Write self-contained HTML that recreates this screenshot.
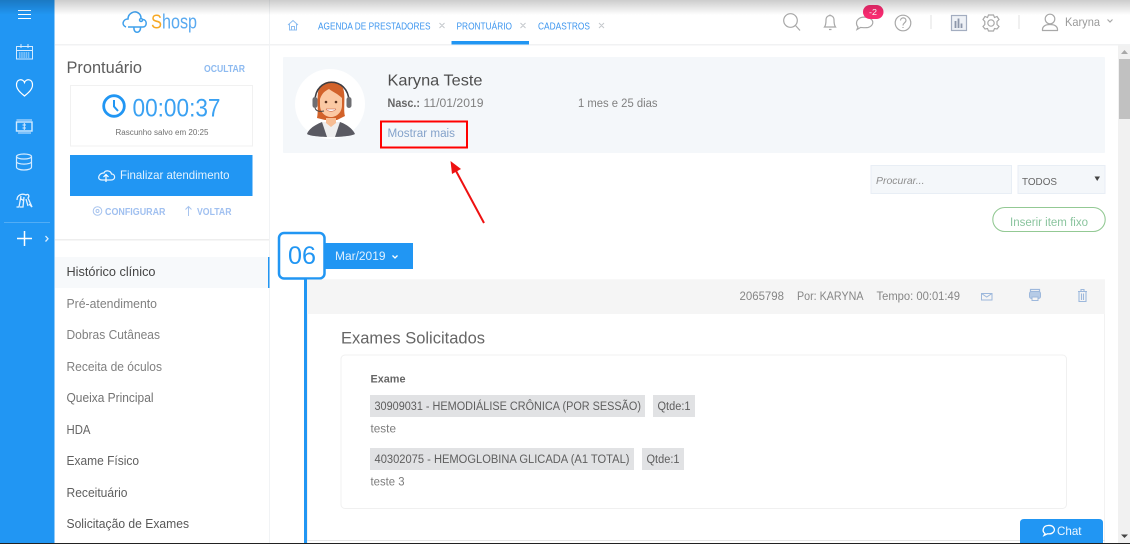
<!DOCTYPE html>
<html lang="pt"><head><meta charset="utf-8"><title>Shosp</title>
<style>
html,body{margin:0;padding:0;width:1130px;height:544px;overflow:hidden;background:#fff}
svg{display:block;filter:blur(.35px)}
text{font-family:"Liberation Sans",sans-serif}
</style></head><body>
<svg width="1130" height="544" viewBox="0 0 1130 544" xmlns="http://www.w3.org/2000/svg">
<defs><linearGradient id="g" x1="0" y1="0" x2="0" y2="1"><stop offset="0" stop-color="#000" stop-opacity=".2"/><stop offset="1" stop-color="#000" stop-opacity="0"/></linearGradient></defs>
<rect width="1130" height="544" fill="#fff"/>
<!-- sidebar -->
<rect width="54.500" height="544" fill="#2196f3"/>
<g fill="none" stroke="#fff" stroke-width="1">
<path d="M18 10.500H31M18 14.500H31M18 18.500H31"/>
<g stroke="#d5ebff"><rect x="16.500" y="46.500" width="16" height="12.500"/><path d="M16.500 50.500H32.500M21 44V48M28 44V48"/><path d="M19 53H30M19 55H30M19 57H30" stroke-dasharray="1.500 .7"/></g>
<path d="M24.500 96C21 93 16.500 89.500 16.500 85C16.500 78.500 23 78.500 24.500 82.500C26 78.500 32.500 78.500 32.500 85C32.500 89.500 28 93 24.500 96Z" stroke-width="1.200"/>
<g stroke="#d5ebff"><rect x="16.500" y="122" width="15.500" height="9" stroke-width="1.400"/><path d="M16.500 120H32M18 133H31M24.300 123V130M22.500 125H26M22.500 128H26"/></g>
<g stroke="#d5ebff" stroke-width="1.200"><ellipse cx="24" cy="156.500" rx="7.500" ry="2.500"/><path d="M16.500 156.500V167C16.500 171 31.500 171 31.500 167V156.500M16.500 161.500C16.500 165 31.500 165 31.500 161.500"/></g>
<g stroke="#e4f2ff" stroke-width="1.300"><path d="M17 200C17 195 22 193 26 195C28 193 30 196 28 198L32 207L29 204M21 196L19 207H16.500M24 197L23 207H20M26 199L28 206M20 198L24 201"/></g>
</g>
<rect x="4" y="222" width="46" height="1" fill="#52adf5"/>
<path d="M17 238.500H32M24.500 231V246" stroke="#fff" stroke-width="1.500" fill="none"/>
<path d="M45.500 236L48 238.800L45.500 241.500" stroke="#dceeff" stroke-width="1.300" fill="none"/>
<!-- left panel -->
<rect x="269" y="0" width="1" height="544" fill="#f1f3f5"/>
<rect x="55" y="44" width="1075" height="1.500" fill="#f1f2f3"/>
<path d="M126 27C121 25 123 19 128 19C128 13 135 10 139 13.500C141 15 141 17 141 19" fill="none" stroke="#3fa0ec" stroke-width="1.500"/>
<path d="M128 27H143C147 27 147.500 20 143 19.500M134 27C133 34 141 34 140.500 27M141 18.500A1.500 1.500 0 1 0 141.100 18.500" fill="none" stroke="#3fa0ec" stroke-width="1.500"/>
<text x="151" y="28.500" font-size="20" fill="#f7a823" textLength="11" lengthAdjust="spacingAndGlyphs">S</text>
<text x="162" y="28.500" font-size="20" fill="#5aaaf0" textLength="35" lengthAdjust="spacingAndGlyphs">hosp</text>
<text x="66.500" y="73" font-size="16.500" fill="#5c5c5c" textLength="75.500" lengthAdjust="spacingAndGlyphs">Prontuário</text>
<text x="204" y="72" font-size="10" font-weight="bold" fill="#8dbaf0" textLength="41" lengthAdjust="spacingAndGlyphs">OCULTAR</text>
<rect x="70.500" y="85.500" width="182" height="60.500" fill="#fff" stroke="#f1f1f1"/>
<circle cx="114" cy="106" r="10.300" fill="none" stroke="#2196f3" stroke-width="2.800"/>
<path d="M114 100V106.500L118 111" fill="none" stroke="#2196f3" stroke-width="2"/>
<text x="132.500" y="116.500" font-size="25" fill="#3aa1f2" textLength="88" lengthAdjust="spacingAndGlyphs">00:00:37</text>
<text x="115.500" y="135" font-size="8" fill="#707070" textLength="93" lengthAdjust="spacingAndGlyphs">Rascunho salvo em 20:25</text>
<rect x="70" y="155" width="182.500" height="41" fill="#2196f3"/>
<path d="M102 180H111C116 180 115.500 174 111.500 174C110.500 170 105 170 104 173C99 172.500 96 180 102 180Z" fill="none" stroke="#e8f4ff" stroke-width="1.200"/>
<path d="M106 182V175M103.500 177L106 174.500L108.500 177" fill="none" stroke="#fff" stroke-width="1.200"/>
<text x="120" y="179" font-size="12" fill="#e3f2ff" textLength="109.500" lengthAdjust="spacingAndGlyphs">Finalizar atendimento</text>
<circle cx="97.500" cy="211" r="4.300" fill="none" stroke="#a8c4ee"/><circle cx="97.500" cy="211" r="1.500" fill="none" stroke="#a8c4ee"/>
<text x="105" y="215" font-size="10" font-weight="bold" fill="#a0c0f0" textLength="60.500" lengthAdjust="spacingAndGlyphs">CONFIGURAR</text>
<path d="M188.500 216V207M185.500 209.500L188.500 206.500L191.500 209.500" fill="none" stroke="#a8c4ee"/>
<text x="197" y="215" font-size="10" font-weight="bold" fill="#a0c0f0" textLength="34.500" lengthAdjust="spacingAndGlyphs">VOLTAR</text>
<rect x="55" y="239" width="214" height="1.500" fill="#eeeeee"/>
<rect x="55" y="257" width="214" height="31" fill="#f7f9fb"/>
<rect x="268" y="257" width="1.500" height="31" fill="#2196f3"/>
<g font-size="12.500" fill="#808080">
<text x="66.500" y="276" fill="#454545" textLength="89" lengthAdjust="spacingAndGlyphs">Histórico clínico</text>
<text x="66.500" y="308" textLength="90.500" lengthAdjust="spacingAndGlyphs">Pré-atendimento</text>
<text x="66.500" y="339" textLength="93.500" lengthAdjust="spacingAndGlyphs">Dobras Cutâneas</text>
<text x="66.500" y="371" textLength="95.500" lengthAdjust="spacingAndGlyphs">Receita de óculos</text>
<text x="66.500" y="402" fill="#727272" textLength="87" lengthAdjust="spacingAndGlyphs">Queixa Principal</text>
<text x="66.500" y="434" fill="#666" textLength="24" lengthAdjust="spacingAndGlyphs">HDA</text>
<text x="66.500" y="465" fill="#606060" textLength="72.500" lengthAdjust="spacingAndGlyphs">Exame Físico</text>
<text x="66.500" y="497" fill="#606060" textLength="61" lengthAdjust="spacingAndGlyphs">Receituário</text>
<text x="66.500" y="528" fill="#585858" textLength="122.500" lengthAdjust="spacingAndGlyphs">Solicitação de Exames</text>
</g>
<!-- tabs -->
<path d="M288 25L293 20.500L298 25M289.500 24V30H296.500V24M291.500 30V26.500H294.500V30" fill="none" stroke="#8dbdf0"/>
<g font-size="10" fill="#3f97ef">
<text x="318" y="29.500" textLength="112.500" lengthAdjust="spacingAndGlyphs">AGENDA DE PRESTADORES</text>
<text x="456.500" y="29.500" textLength="55.500" lengthAdjust="spacingAndGlyphs">PRONTUÁRIO</text>
<text x="538" y="29.500" textLength="52" lengthAdjust="spacingAndGlyphs">CADASTROS</text>
</g>
<path d="M439.500 23L444.500 28M444.500 23L439.500 28M520.500 23L525.500 28M525.500 23L520.500 28M599 23L604 28M604 23L599 28" stroke="#c4c8cc" fill="none"/>
<rect x="451.500" y="41" width="77.500" height="3.500" fill="#2196f3"/>
<!-- header icons -->
<g fill="none" stroke="#a8a8a8" stroke-width="1.200">
<circle cx="790.500" cy="20.500" r="6.800"/><path d="M795.500 25.500L800 30.500"/>
<path d="M824.500 27C826 25 826 22 826 20C826 14 834 14 834 20C834 22 834 25 835.500 27ZM829 29.500H831.500M830 14.500V16"/>
<path d="M858 27C856 25 856 21.500 858 19.500C861 16 869 16.500 872 20C874 23 872 26.500 868 27.500C865 28 862 27.500 860.500 27.500L857 29.500Z"/>
<circle cx="903" cy="23" r="7.800"/><path d="M900.500 20.500C900.500 17 906 17 906 20.500C906 22.500 903 23 903 25.500M903 27V28"/>
<path d="M931 15V29M1019 15V29" stroke="#e6e6e6"/>
<rect x="951.500" y="15.500" width="15" height="15" fill="#eef1f6" stroke="#a3adc0"/>
<path d="M955.500 28V21M958.500 28V18.500M961.500 28V23.500" stroke="#8d97aa" stroke-width="1.800"/>
<path d="M988.500 15L993.500 15L994.500 17.500L997 16.500L999 19.500L997 21.500V24.500L999 26.500L997 29L994.500 28.500L993.500 31H988.500L987.500 28.500L985 29L983 26.500L984.800 24.500V21.500L983 19.500L985 16.500L987.500 17.500Z"/>
<circle cx="991" cy="23" r="3.200"/>
<circle cx="1050" cy="19" r="4.800"/><path d="M1042.500 30.500C1042 26 1046 24.500 1050 24.500C1054 24.500 1058 26 1057.500 30.500Z"/>
<path d="M1107.500 19.500L1110 22L1112.500 19.500"/>
</g>
<rect x="863" y="5" width="20.500" height="14" rx="7" fill="#f72b70"/>
<text x="869" y="15" font-size="8" fill="#fff" textLength="8" lengthAdjust="spacingAndGlyphs">-2</text>
<text x="1065" y="26" font-size="12" fill="#9a9a9a" textLength="35" lengthAdjust="spacingAndGlyphs">Karyna</text>
<!-- patient panel -->
<rect x="283" y="57" width="822" height="96" rx="1" fill="#f4f7fa"/>
<circle cx="330" cy="104" r="35" fill="#fff"/>
<path d="M307 134C309 128 317 124 322 122L331 127L340 122C346 124 353 129 355 134C348 138 313 138 307 134Z" fill="#5a5a62"/>
<path d="M322 122H340L335 137H327Z" fill="#eeeeee"/>
<path d="M317 118C319 110 316 96 319 89C323 79 339 79 343 88C346 96 343 110 345 116L337 120H325Z" fill="#d2622a"/>
<path d="M320 99C322 93 325 91 329 89C333 92 338 94 342 98V105C342 113 336 117 331 117C326 117 320 113 320 105Z" fill="#fbc9a3"/>
<path d="M326 118H336V123L331 127L326 123Z" fill="#f7bd93"/>
<circle cx="326" cy="102" r="1.300" fill="#5a3320"/><circle cx="336" cy="102" r="1.300" fill="#5a3320"/>
<path d="M326 109H336C335 112 327 112 326 109Z" fill="#fff" stroke="#c04f30" stroke-width=".5"/>
<path d="M315 101C315 76 348 76 349 101" fill="none" stroke="#3d3d42" stroke-width="1.600"/>
<rect x="312.500" y="97" width="5" height="11" rx="2.500" fill="#6e6e72"/>
<rect x="346.500" y="97" width="5" height="11" rx="2.500" fill="#6e6e72"/>
<path d="M315 108C316 111 319 112 324 111" fill="none" stroke="#444" stroke-width="1"/>
<text x="387.500" y="85.500" font-size="16" fill="#4e4e4e" textLength="95" lengthAdjust="spacingAndGlyphs">Karyna Teste</text>
<text x="387.500" y="107" font-size="11.500" font-weight="bold" fill="#666" textLength="32.500" lengthAdjust="spacingAndGlyphs">Nasc.:</text>
<text x="423.500" y="107" font-size="11.500" fill="#808080" textLength="60" lengthAdjust="spacingAndGlyphs">11/01/2019</text>
<text x="578" y="107" font-size="11.500" fill="#808080" textLength="79.500" lengthAdjust="spacingAndGlyphs">1 mes e 25 dias</text>
<rect x="381" y="121.500" width="86" height="26" fill="none" stroke="#f00" stroke-width="2"/>
<text x="387.500" y="137" font-size="11.500" fill="#84a2ca" textLength="67.500" lengthAdjust="spacingAndGlyphs">Mostrar mais</text>
<path d="M484 223L455.500 170" stroke="#ee1111" stroke-width="2" fill="none"/>
<path d="M450.500 161L461 169L452 174Z" fill="#ee1111"/>
<!-- filters -->
<rect x="871" y="165.500" width="140.500" height="28" fill="#f4f7fa" stroke="#e8eef5"/>
<text x="876" y="184" font-size="10.500" font-style="italic" fill="#8e8e8e" textLength="48.500" lengthAdjust="spacingAndGlyphs">Procurar...</text>
<rect x="1018" y="165.500" width="87" height="28" fill="#f4f7fa" stroke="#e8eef5"/>
<text x="1022" y="185" font-size="10.500" fill="#666" textLength="35" lengthAdjust="spacingAndGlyphs">TODOS</text>
<path d="M1094.500 176.500H1100L1097.200 181Z" fill="#444"/>
<rect x="992.800" y="207.500" width="112.400" height="24" rx="12" fill="#fff" stroke="#93c994" stroke-width="1.100"/>
<text x="1010" y="226" font-size="11.500" fill="#8ac49e" textLength="78" lengthAdjust="spacingAndGlyphs">Inserir item fixo</text>
<!-- scrollbar -->
<rect x="1118" y="45.500" width="12" height="498" fill="#f1f1f1"/>
<rect x="1119" y="59" width="11" height="60" fill="#c1c1c1"/>
<path d="M1121 54H1128L1124.500 50Z" fill="#a8a8a8"/>
<path d="M1121 534.500H1128L1124.500 538Z" fill="#444"/>
<!-- timeline -->
<rect x="304" y="279" width="3" height="265" fill="#2196f3"/>
<rect x="325" y="243" width="88" height="26" fill="#2196f3"/>
<rect x="279" y="233" width="45.500" height="45.500" rx="5" fill="#fff" stroke="#2196f3" stroke-width="2.500"/>
<text x="288" y="264" font-size="25" fill="#2196f3" textLength="28" lengthAdjust="spacingAndGlyphs">06</text>
<text x="335" y="260" font-size="11.500" fill="#dff0ff" textLength="50.500" lengthAdjust="spacingAndGlyphs">Mar/2019</text>
<path d="M392.500 255.500L395 258L397.500 255.500" fill="none" stroke="#fff" stroke-width="1.300"/>
<!-- card -->
<rect x="307.500" y="280" width="797" height="264" fill="#fff" stroke="#f2f2f2"/>
<rect x="307" y="280" width="798" height="34" fill="#f5f5f5"/>
<rect x="307" y="540" width="798" height="1" fill="#e6e6e6"/>
<g font-size="11.500" fill="#868686">
<text x="739.500" y="300" textLength="44.500" lengthAdjust="spacingAndGlyphs">2065798</text>
<text x="797" y="300" textLength="66.500" lengthAdjust="spacingAndGlyphs">Por: KARYNA</text>
<text x="876.500" y="300" textLength="83.500" lengthAdjust="spacingAndGlyphs">Tempo: 00:01:49</text>
</g>
<g fill="none" stroke="#9db8dc">
<rect x="981.500" y="293.500" width="10.500" height="6.500"/><path d="M981.500 293.500L986.700 297L992 293.500"/>
<path d="M1030.500 292V289.500H1039.500V292" stroke-width="1.200"/><rect x="1029.500" y="291.500" width="11" height="7" rx="2" fill="#b6cbe6"/><rect x="1032" y="297" width="6" height="3.500" fill="#f5f5f5"/>
<path d="M1078 291.500H1087M1081 291V289.500H1084V291M1079 292V301.500H1086V292M1081.500 293.500V300M1083.500 293.500V300" stroke-width="1.100"/>
</g>
<text x="341" y="343.500" font-size="16.500" fill="#666" textLength="144" lengthAdjust="spacingAndGlyphs">Exames Solicitados</text>
<rect x="341" y="355" width="725.500" height="153.500" rx="4" fill="#fff" stroke="#f0f0f0"/>
<text x="370.500" y="382.500" font-size="11" font-weight="bold" fill="#666" textLength="35" lengthAdjust="spacingAndGlyphs">Exame</text>
<g fill="#e1e2e4">
<rect x="370" y="395" width="275" height="22"/><rect x="653" y="395" width="42" height="22"/>
<rect x="370" y="448" width="264" height="22"/><rect x="642" y="448" width="42" height="22"/>
</g>
<g font-size="11.500" fill="#5e5e5e">
<text x="374.500" y="410" textLength="266.500" lengthAdjust="spacingAndGlyphs">30909031 - HEMODIÁLISE CRÔNICA (POR SESSÃO)</text>
<text x="657.500" y="410" textLength="33" lengthAdjust="spacingAndGlyphs">Qtde:1</text>
<text x="374.500" y="463" textLength="255" lengthAdjust="spacingAndGlyphs">40302075 - HEMOGLOBINA GLICADA (A1 TOTAL)</text>
<text x="646.500" y="463" textLength="33" lengthAdjust="spacingAndGlyphs">Qtde:1</text>
<text x="370.500" y="432.500" fill="#7c7c7c" textLength="25.500" lengthAdjust="spacingAndGlyphs">teste</text>
<text x="370.500" y="485.500" fill="#7c7c7c" textLength="34" lengthAdjust="spacingAndGlyphs">teste 3</text>
</g>
<!-- chat -->
<path d="M1020 544V523Q1020 519 1024 519H1099Q1103 519 1103 523V544Z" fill="#2196f3"/>
<path d="M1045 533.500C1042 531.500 1042.500 526 1048 525.500C1054 525 1056 530 1053 532.500C1051.500 534 1049 534 1047.500 533.800L1044 535.500Z" fill="none" stroke="#fff" stroke-width="1.300"/>
<text x="1057" y="535" font-size="12" fill="#eef7ff" textLength="24.500" lengthAdjust="spacingAndGlyphs">Chat</text>
<!-- top shade & bottom line -->
<rect width="1130" height="15" fill="url(#g)"/>
<rect y="543" width="1130" height="1" fill="#222"/>
</svg>
</body></html>
